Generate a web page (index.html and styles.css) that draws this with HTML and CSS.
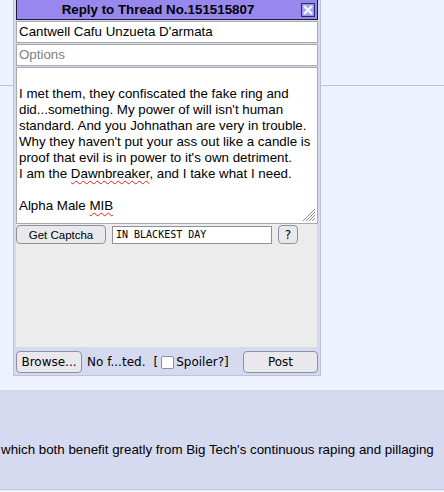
FILE: index.html
```html
<!DOCTYPE html>
<html>
<head>
<meta charset="utf-8">
<link rel="stylesheet" href="styles.css">
</head>
<body>
<div class="page">
  <div class="rule"></div>
  <div class="post">
    <div class="post-text">which both benefit greatly from Big Tech's continuous raping and pillaging</div>
  </div>
</div>

<form class="qr">
  <div class="qr-header">
    <span class="qr-title">Reply to Thread No.151515807</span>
    <svg class="qr-close" width="14" height="14" viewBox="0 0 14 14">
      <rect x="0.5" y="0.5" width="13" height="13" fill="#8c8ce6" stroke="#2b2b6b"/>
      <rect x="1.5" y="1.5" width="11" height="11" fill="#a6a6f0"/>
      <path d="M3 3 L11 11 M11 3 L3 11" stroke="#ffffff" stroke-width="2.2"/>
      <path d="M3 3 L11 11 M11 3 L3 11" stroke="#d8d8f8" stroke-width="0.8" stroke-dasharray="1 1"/>
    </svg>
  </div>
  <div class="field">Cantwell Cafu Unzueta D'armata</div>
  <div class="field placeholder">Options</div>
  <div class="comment">
    <br>
    I met them, they confiscated the fake ring and<br>
    did...something. My power of will isn't human<br>
    standard. And you Johnathan are very in trouble.<br>
    Why they haven't put your ass out like a candle is<br>
    proof that evil is in power to it's own detriment.<br>
    I am the <span class="typo">Dawnbreaker</span>, and I take what I need.<br>
    <br>
    Alpha Male <span class="typo">MIB</span>
    <svg class="grip" width="14" height="14" viewBox="0 0 14 14">
      <path d="M13 1 L1 13 M13 4 L4 13 M13 7 L7 13 M13 10 L10 13" stroke="#8a8a8a" stroke-width="1"/>
    </svg>
  </div>
  <div class="captcha">
    <div class="captcha-row">
      <span class="btn btn-captcha">Get Captcha</span>
      <span class="captcha-input">IN BLACKEST DAY</span>
      <span class="btn btn-help">?</span>
    </div>
  </div>
  <div class="bottom-row">
    <span class="btn btn-browse">Browse...</span>
    <span class="file-label">No f...ted.</span>
    <span class="spoiler">[<span class="checkbox"></span>Spoiler?]</span>
    <span class="btn btn-post">Post</span>
  </div>
</form>
</body>
</html>
```

FILE: styles.css
```css
html, body {
  margin: 0;
  padding: 0;
}
body {
  background: #eef2ff;
  font-family: "Liberation Sans", Arial, sans-serif;
  font-size: 13.33px;
  color: #000;
  width: 444px;
  height: 492px;
  overflow: hidden;
  position: relative;
}
.page {
  padding-top: 85px;
}
.rule {
  height: 0;
  border-top: 1px solid #b7c5d9;
}
.post {
  margin-top: 304px;
  height: 99px;
  background: #d6daf0;
  border-bottom: 1px solid #b7c5d9;
  box-sizing: content-box;
}
.post-text {
  padding-top: 52px;
  padding-left: 1px;
  line-height: 16px;
  white-space: nowrap;
}

/* quick reply window */
.qr {
  position: absolute;
  left: 13px;
  top: -4px;
  width: 302px;
  margin: 0;
  padding: 2px;
  background: #d6daf0;
  border: 1px solid #b7c5d9;
  display: flex;
  flex-direction: column;
}
.qr-header {
  position: relative;
  height: 19px;
  background: #9888ee;
  border: 1px solid #1a1a3a;
  display: flex;
  align-items: center;
  padding-right: 18px;
  margin-bottom: 1px;
}
.qr-title {
  flex: 1;
  text-align: center;
  font-weight: bold;
  font-size: 13.33px;
  line-height: 19px;
}
.qr-close {
  position: absolute;
  right: 2px;
  top: 3px;
}
.field {
  height: 22px;
  box-sizing: border-box;
  background: #fff;
  border: 1px solid #aaa;
  padding: 0 2px;
  line-height: 20px;
  margin-bottom: 1px;
}
.placeholder {
  color: #808080;
}
.comment {
  position: relative;
  height: 157px;
  box-sizing: border-box;
  background: #fff;
  border: 1px solid #aaa;
  padding: 2px 2px;
  line-height: 16px;
  white-space: nowrap;
}
.typo {
  text-decoration: underline wavy #e02020;
  text-decoration-thickness: 1px;
  text-underline-offset: 2px;
}
.grip {
  position: absolute;
  right: 1px;
  bottom: 1px;
}
.captcha {
  height: 123px;
  background: #ececec;
  margin-right: 1px;
}
.captcha-row {
  display: flex;
  align-items: center;
  padding-top: 1px;
}
.btn {
  box-sizing: border-box;
  display: inline-flex;
  align-items: center;
  justify-content: center;
  background: #e9e9ed;
  border: 1px solid #8f8f9d;
  border-radius: 4px;
  font-family: "DejaVu Sans", Verdana, sans-serif;
  font-size: 12px;
  color: #000;
}
.btn-captcha {
  width: 90px;
  height: 19px;
  font-family: "Liberation Sans", Arial, sans-serif;
  font-size: 11.5px;
}
.captcha-input {
  box-sizing: border-box;
  width: 160px;
  height: 18px;
  margin-left: 6px;
  background: #fff;
  border: 1px solid #8f8f9d;
  font-family: "DejaVu Sans Mono", monospace;
  font-size: 10px;
  line-height: 16px;
  padding-left: 3px;
}
.btn-help {
  width: 20px;
  height: 19px;
  margin-left: 6px;
}
.bottom-row {
  display: flex;
  align-items: center;
  margin-top: 4px;
  font-family: "DejaVu Sans", Verdana, sans-serif;
  font-size: 12px;
}
.btn-browse {
  width: 66px;
  height: 22px;
}
.file-label {
  margin-left: 5px;
}
.spoiler {
  margin-left: 8px;
  display: inline-flex;
  align-items: center;
}
.checkbox {
  display: inline-block;
  width: 13px;
  height: 13px;
  box-sizing: border-box;
  border: 1px solid #8f8f9d;
  border-radius: 2px;
  background: #fff;
  margin: 0 2px 0 3px;
}
.btn-post {
  margin-left: auto;
  width: 75px;
  height: 22px;
}
```
